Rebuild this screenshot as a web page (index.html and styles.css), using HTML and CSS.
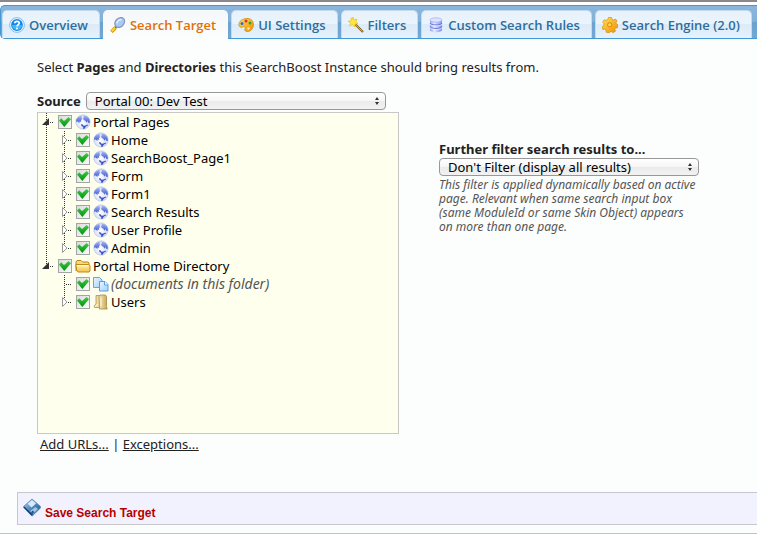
FILE: index.html
```html
<!DOCTYPE html>
<html lang="en">
<head>
<meta charset="utf-8">
<title>Search Target</title>
<link rel="stylesheet" href="styles.css">
</head>
<body>
<svg class="sprite" aria-hidden="true">
  <defs>
    <linearGradient id="gFolder" x2="0" y2="1"><stop offset="0" stop-color="#fff3b0"/><stop offset="1" stop-color="#f3c04a"/></linearGradient>
    <radialGradient id="gGlobe" cx=".45" cy=".55"><stop offset="0" stop-color="#fff"/><stop offset="1" stop-color="#d5dcf8"/></radialGradient>
    <linearGradient id="gLand" x2="0" y2="1"><stop offset="0" stop-color="#a5b5f3"/><stop offset="1" stop-color="#3d5ad0"/></linearGradient>
    <linearGradient id="gDb"><stop offset="0" stop-color="#8d9df5"/><stop offset=".35" stop-color="#e6eaff"/><stop offset="1" stop-color="#7d8df0"/></linearGradient>
    <linearGradient id="gDoc" x2="1" y2="1"><stop offset="0" stop-color="#eaf5ff"/><stop offset="1" stop-color="#a4d0f8"/></linearGradient>
    <linearGradient id="gTan"><stop offset="0" stop-color="#f6e9bd"/><stop offset="1" stop-color="#c7a553"/></linearGradient>
    <linearGradient id="gGold" x2="1" y2="1"><stop offset="0" stop-color="#ffe25a"/><stop offset="1" stop-color="#f08c00"/></linearGradient>
    <linearGradient id="gDisk" x2="1" y2="1"><stop offset="0" stop-color="#b9d8f0"/><stop offset=".5" stop-color="#4f86bd"/><stop offset="1" stop-color="#1c4a80"/></linearGradient>
  </defs>
  <symbol id="open" viewBox="0 0 20 18">
    <path d="M11 5v7H4Z" fill="#333"/><path d="M12 9h1v1h-1ZM14 9h1v1h-1Z" fill="#333"/>
  </symbol>
  <symbol id="closed" viewBox="0 0 20 18">
    <path d="M6.500 4.500L11 9 6.500 13.500Z" fill="#fff" stroke="#999"/><path d="M12 9h1v1h-1ZM14 9h1v1h-1Z" fill="#333"/>
  </symbol>
  <symbol id="leaf" viewBox="0 0 20 18">
    <path d="M10 9h1v1h-1ZM12 9h1v1h-1ZM14 9h1v1h-1Z" fill="#333"/>
  </symbol>
  <symbol id="globe" viewBox="0 0 16 16">
    <circle cx="8" cy="8" r="7.100" fill="url(#gGlobe)" stroke="#b9c3f0" stroke-width=".8"/>
    <path d="M1 6C2 4 3.500 2.500 5.500 2l1.500.7-.5 1.500.8.8-1.300 1 .2 2-1.700-.8V9L2.500 7.500 1.200 7.700Z" fill="url(#gLand)"/>
    <path d="M8.500 1.500l3.500 1 2.300 2.500.7 3.500-1.500.5-1-2-1 1.800-1.200-2L8.800 6 8 4.200 9 3Z" fill="url(#gLand)"/>
    <path d="M6 10l1.700.5.8 1.300 2-.3 2-1 .5 1-2 1-1.500 2.200H8L8.300 13 6.500 12Z" fill="#3953cb"/>
  </symbol>
  <symbol id="folder" viewBox="0 0 16 16">
    <path d="M1 13V4l1-1.500h4L7.500 4H13l1 1v2" fill="#f9d978" stroke="#b98418"/>
    <path d="M.8 6.500h12.500l1.700 1v5.500l-1 1H3L1.800 13Z" fill="url(#gFolder)" stroke="#c08a1c"/>
    <path d="M2.300 7.700h10.500" stroke="#fffbe0"/>
  </symbol>
  <symbol id="docs" viewBox="0 0 16 16">
    <path d="M.5 1.500h6l2.500 2.500v7.500H.5Z" fill="url(#gDoc)" stroke="#62a8e8"/>
    <path d="M6.500 5.500h5.500l3 3v6.500H6.500Z" fill="url(#gDoc)" stroke="#559fe6"/>
    <path d="M11.500 5.500v3.500H15" fill="#fff" stroke="#559fe6"/>
  </symbol>
  <symbol id="users" viewBox="0 0 16 16">
    <path d="M3 1.500h5v12H1.500L1 12 3 10Z" fill="#efdca5" stroke="#b3924a" stroke-width=".8"/>
    <path d="M6 2.500l1-1.500h5.500l1 1.500v10l.7 2.500H6.500Z" fill="url(#gTan)" stroke="#a98742" stroke-width=".8"/>
    <path d="M8 4v8M2 13l3-3" stroke="#fff7d8"/>
  </symbol>
  <symbol id="help" viewBox="0 0 16 16">
    <circle cx="8" cy="8" r="7.400" fill="#e8f5ff" stroke="#6ab0e8" stroke-width=".8"/>
    <circle cx="8" cy="8" r="5.900" fill="#1589e8"/>
    <path d="M3 8a5 5 0 0 0 10 0Z" fill="#3fb8ff"/>
    <path d="M5.800 6.300C5.800 3.600 10.300 3.700 10.200 6.200 10.100 7.800 8 7.700 8 9.500" fill="none" stroke="#fff" stroke-width="1.700"/>
    <circle cx="8" cy="11.500" r="1" fill="#fff"/>
  </symbol>
  <symbol id="lens" viewBox="0 0 16 16">
    <path d="M6.500 9.500L5 11" stroke="#56607a" stroke-width="2"/>
    <path d="M5.500 10.500L1.500 14.800" stroke="#c78a00" stroke-width="3.400"/>
    <path d="M5 10.800L1.700 14.400" stroke="#ffdc28" stroke-width="2"/>
    <ellipse cx="9.700" cy="5.500" rx="5.500" ry="4.200" transform="rotate(-45 9.700 5.500)" fill="#a3cdf4" stroke="#8c90c8" stroke-width="1.200"/>
    <path d="M7 6.500C7 4.500 9 2.700 11.500 2.500" stroke="#e8f7ff" stroke-width="1.400" fill="none"/>
  </symbol>
  <symbol id="palette" viewBox="0 0 16 16">
    <path d="M1 6.500C2 3 6 1.300 10 1.500 13.500 1.700 15.700 4.500 15.400 8 15 11.500 13 14.400 9.500 14.500 6.500 14.600 6.300 12.500 7.300 11.300 8 10 6 9.300 4.500 10 2 11 .5 9 1 6.500Z" fill="url(#gGold)" stroke="#c98a14" stroke-width=".8"/>
    <circle cx="4" cy="6.500" r="1.500" fill="#3568d8"/><circle cx="8" cy="4" r="1.500" fill="#dd3420"/><circle cx="12" cy="6" r="1.500" fill="#31a33b"/><circle cx="10.500" cy="11.500" r="1.200" fill="#ffe9a0"/>
  </symbol>
  <symbol id="wand" viewBox="0 0 16 16">
    <path d="M6 6l9 9" stroke="#8c6411" stroke-width="2.200"/><path d="M6 6l8.500 8.500" stroke="#e2aa26"/>
    <path d="M5 0l1 3 3-1-1.200 3L10 6.500 7 7 6.500 10 4.500 7.500 1.500 9 2.700 6 0 4.300 3.300 3.500 3 .8 4.300 2.300Z" fill="#ffe83d" stroke="#edb80c" stroke-width=".6"/>
  </symbol>
  <symbol id="db" viewBox="0 0 16 16">
    <path d="M2 3v10c0 3 12 3 12 0V3Z" fill="url(#gDb)"/>
    <path d="M2 6c0 2.600 12 2.600 12 0M2 9.500c0 2.600 12 2.600 12 0" fill="none" stroke="#6575d8"/>
    <path d="M2 7c0 2.600 12 2.600 12 0M2 10.500c0 2.600 12 2.600 12 0" fill="none" stroke="#f0f3ff" stroke-width=".7"/>
    <ellipse cx="8" cy="3" rx="6" ry="2.200" fill="#dce2ff" stroke="#a2aef2" stroke-width=".7"/>
  </symbol>
  <symbol id="gear" viewBox="0 0 16 16">
    <path d="M6.500 .5h3l.5 2 1.500.5 2-1 1.500 2-1 1.800.5 1.200 1.500.8-.5 3-2 .3-.7 1.300.7 1.800-2.500 1.500-1.500-1.200-1.500.2-1 1.300-2.800-.8-.2-2-1.200-1-2 .2L.3 9.600l1.700-1.300V6.800L.6 5.200 2.200 2.800l2 .5 1.500-.8Z" fill="url(#gGold)" stroke="#dc8d0b" stroke-width=".7"/>
    <circle cx="7.700" cy="7.800" r="2.100" fill="#ffd84a" stroke="#d98406"/>
  </symbol>
  <symbol id="disk" viewBox="0 0 18 18">
    <path d="M9 .5l8.500 7.500v1.500L9 17.700 .5 9V8Z" fill="url(#gDisk)" stroke="#5480ad" stroke-width=".7"/>
    <path d="M9 1.500l4 3.500-4.500 4L4.700 5.300Z" fill="#d8ebf9"/>
    <path d="M12.500 8.500l2.500 2-5 5-3-3Z" fill="#9fc5e6"/>
    <path d="M9.500 12l1.800 1.500L9.500 15.500 8 14Z" fill="#24558f"/>
    <path d="M1 8.500l8 8" stroke="#183f70" stroke-width="1.300"/>
  </symbol>
</svg>

<nav class="tabs">
  <a class="tab" href="#overview"><svg class="icon"><use href="#help"/></svg>Overview</a>
  <a class="tab active" href="#target" aria-current="page"><svg class="icon"><use href="#lens"/></svg>Search Target</a>
  <a class="tab" href="#ui"><svg class="icon"><use href="#palette"/></svg>UI Settings</a>
  <a class="tab" href="#filters"><svg class="icon"><use href="#wand"/></svg>Filters</a>
  <a class="tab" href="#rules"><svg class="icon"><use href="#db"/></svg>Custom Search Rules</a>
  <a class="tab" href="#engine"><svg class="icon"><use href="#gear"/></svg>Search Engine (2.0)</a>
</nav>

<main class="panel">
  <p class="intro">Select <b>Pages</b> and <b>Directories</b> this SearchBoost Instance should bring results from.</p>
  <div class="columns">
    <section class="source">
      <div class="source-row">
        <label for="source">Source</label>
        <span class="picker"><select id="source"><option>Portal 00: Dev Test</option></select></span>
      </div>
      <ul class="tree">
        <li>
          <div class="row"><svg class="toggle"><use href="#open"/></svg><input type="checkbox" id="c1" checked><svg class="icon"><use href="#globe"/></svg><label for="c1">Portal Pages</label></div>
          <ul>
            <li><div class="row"><svg class="toggle"><use href="#closed"/></svg><input type="checkbox" id="c2" checked><svg class="icon"><use href="#globe"/></svg><label for="c2">Home</label></div></li>
            <li><div class="row"><svg class="toggle"><use href="#closed"/></svg><input type="checkbox" id="c3" checked><svg class="icon"><use href="#globe"/></svg><label for="c3">SearchBoost_Page1</label></div></li>
            <li><div class="row"><svg class="toggle"><use href="#closed"/></svg><input type="checkbox" id="c4" checked><svg class="icon"><use href="#globe"/></svg><label for="c4">Form</label></div></li>
            <li><div class="row"><svg class="toggle"><use href="#closed"/></svg><input type="checkbox" id="c5" checked><svg class="icon"><use href="#globe"/></svg><label for="c5">Form1</label></div></li>
            <li><div class="row"><svg class="toggle"><use href="#closed"/></svg><input type="checkbox" id="c6" checked><svg class="icon"><use href="#globe"/></svg><label for="c6">Search Results</label></div></li>
            <li><div class="row"><svg class="toggle"><use href="#closed"/></svg><input type="checkbox" id="c7" checked><svg class="icon"><use href="#globe"/></svg><label for="c7">User Profile</label></div></li>
            <li><div class="row"><svg class="toggle"><use href="#closed"/></svg><input type="checkbox" id="c8" checked><svg class="icon"><use href="#globe"/></svg><label for="c8">Admin</label></div></li>
          </ul>
        </li>
        <li>
          <div class="row"><svg class="toggle"><use href="#open"/></svg><input type="checkbox" id="c9" checked><svg class="icon"><use href="#folder"/></svg><label for="c9">Portal Home Directory</label></div>
          <ul>
            <li><div class="row"><svg class="toggle"><use href="#leaf"/></svg><input type="checkbox" id="c10" checked><svg class="icon"><use href="#docs"/></svg><label class="note" for="c10">(documents in this folder)</label></div></li>
            <li><div class="row"><svg class="toggle"><use href="#closed"/></svg><input type="checkbox" id="c11" checked><svg class="icon"><use href="#users"/></svg><label for="c11">Users</label></div></li>
          </ul>
        </li>
      </ul>
      <div class="links"><a href="#add">Add URLs...</a> | <a href="#exceptions">Exceptions...</a></div>
    </section>
    <section class="filter">
      <label for="filter">Further filter search results to...</label>
      <span class="picker"><select id="filter"><option>Don't Filter (display all results)</option></select></span>
      <p class="hint">This filter is applied dynamically based on active page. Relevant when same search input box (same ModuleId or same Skin Object) appears on more than one page.</p>
    </section>
  </div>
  <div class="actions">
    <button type="button"><svg class="disk"><use href="#disk"/></svg><span>Save Search Target</span></button>
  </div>
</main>
</body>
</html>
```
FILE: styles.css
```css
* { box-sizing: border-box; }
body {
  margin: 0;
  border-top: 2px solid #8a888c;
  padding-top: 3px;
  background: #fff;
  color: #222;
  font: 13px/18px "Noto Sans", "Open Sans", sans-serif;
  overflow-x: hidden;
}
ul, p { margin: 0; padding: 0; }
ul { list-style: none; }
.sprite { position: absolute; width: 0; height: 0; }
.icon { width: 16px; height: 16px; flex: none; }

.tabs {
  display: flex;
  gap: 3px;
  padding: 4px 0 0 1px;
  height: 34px;
  border: solid #4297d7;
  border-width: 1px 0 1px 1px;
  border-radius: 5px 0 0 5px;
  background: linear-gradient(#8bb5dc, #80b0da 50%, #6ba1d0 50%, #74a8d4);
}
.tab {
  display: flex;
  align-items: center;
  gap: 4px;
  padding: 0 11px 0 6px;
  border: 1px solid #c5dbec;
  border-bottom: 0;
  border-radius: 5px 5px 0 0;
  background: linear-gradient(#e8f2fc, #e9f4fd 50%, #dcebf8 50%, #e6f2fc);
  color: #2e6e9e;
  font-family: "Open Sans", "Noto Sans", sans-serif;
  font-weight: 600;
  text-decoration: none;
  white-space: nowrap;
}
.tab.active {
  margin-bottom: -1px;
  border-color: #f9fbfb;
  background: linear-gradient(#f5f8f9, #fcfdfd);
  color: #e17009;
}

.panel {
  background: #fcfdfd;
  border-bottom: 1px solid #a5c9e6;
  padding: 19px 0 8px 17px;
}
.intro { margin: 0 20px 16px; }
.columns { display: flex; gap: 40px; padding: 0 58px 0 20px; }
.source { flex: 362 1 0; min-width: 0; }
.source-row { display: flex; align-items: center; gap: 5px; padding-right: 13px; }
.source-row label, .filter label { font-weight: bold; }
.picker { position: relative; display: block; flex: 1; }
.picker::before, .picker::after {
  content: "";
  position: absolute;
  right: 7px;
  border: solid transparent;
  border-width: 0 2px;
  pointer-events: none;
}
.picker::before { top: 5px; border-bottom: 3px solid #333; }
.picker::after { bottom: 5px; border-top: 3px solid #333; }
select {
  display: block;
  width: 100%;
  height: 18px;
  padding: 0 8px;
  appearance: none;
  border: 1px solid #989898;
  border-radius: 4px;
  background: linear-gradient(#fff, #f6f6f6 50%, #ebebeb 50%, #f2f2f2);
  color: #000;
  font: inherit;
  line-height: 16px;
}
.tree {
  margin-top: 2px;
  height: 322px;
  overflow: auto;
  border: 1px solid #c8c8c8;
  background: #ffffee;
  color: #000;
}
.tree ul li { padding-left: 18px; }
.tree li { position: relative; }
.tree li::before {
  content: "";
  position: absolute;
  top: 0;
  bottom: 0;
  left: 8px;
  width: 1px;
  background: repeating-linear-gradient(#333 0 1px, transparent 1px 2px);
}
.tree ul li::before { left: 26px; }
.tree li:last-child::before { bottom: auto; height: 10px; }
.row { display: flex; align-items: center; height: 18px; }
.toggle { position: relative; width: 20px; height: 18px; flex: none; }
input[type="checkbox"] {
  appearance: none;
  display: grid;
  place-items: center;
  width: 14px;
  height: 14px;
  margin: 0 3px 0 0;
  border: 1px solid #a3a4a4;
  background: linear-gradient(135deg, #dcdcdc, #fafafa);
  flex: none;
}
input[type="checkbox"]:checked::before {
  content: "";
  width: 12px;
  height: 10px;
  background: linear-gradient(#35d23c, #078d12);
  clip-path: polygon(0 35%, 18% 12%, 42% 40%, 80% 0, 100% 22%, 44% 100%);
}
.row label { margin-left: 2px; white-space: nowrap; }
.row .note { color: #555; font-size: 14px; font-style: italic; }
.links { padding: 1px 3px; }
.links a { color: #222; }

.filter { flex: 260 1 0; min-width: 0; padding-top: 48px; }
.filter label { display: block; }
.hint { margin-top: 2px; color: #555; font-size: 12px; line-height: 14px; font-style: italic; }

.actions {
  margin-top: 38px;
  border: 1px solid #c8c8cc;
  border-right: 0;
  background: #f2f2ff;
}
.actions button {
  display: flex;
  align-items: flex-start;
  gap: 4px;
  padding: 5px 5px 3px;
  border: 0;
  background: none;
  color: #b80000;
  font: bold 12px/16px "Liberation Sans", Arial, sans-serif;
}
.actions span { padding-top: 7px; }
.disk { width: 18px; height: 19px; }
```
